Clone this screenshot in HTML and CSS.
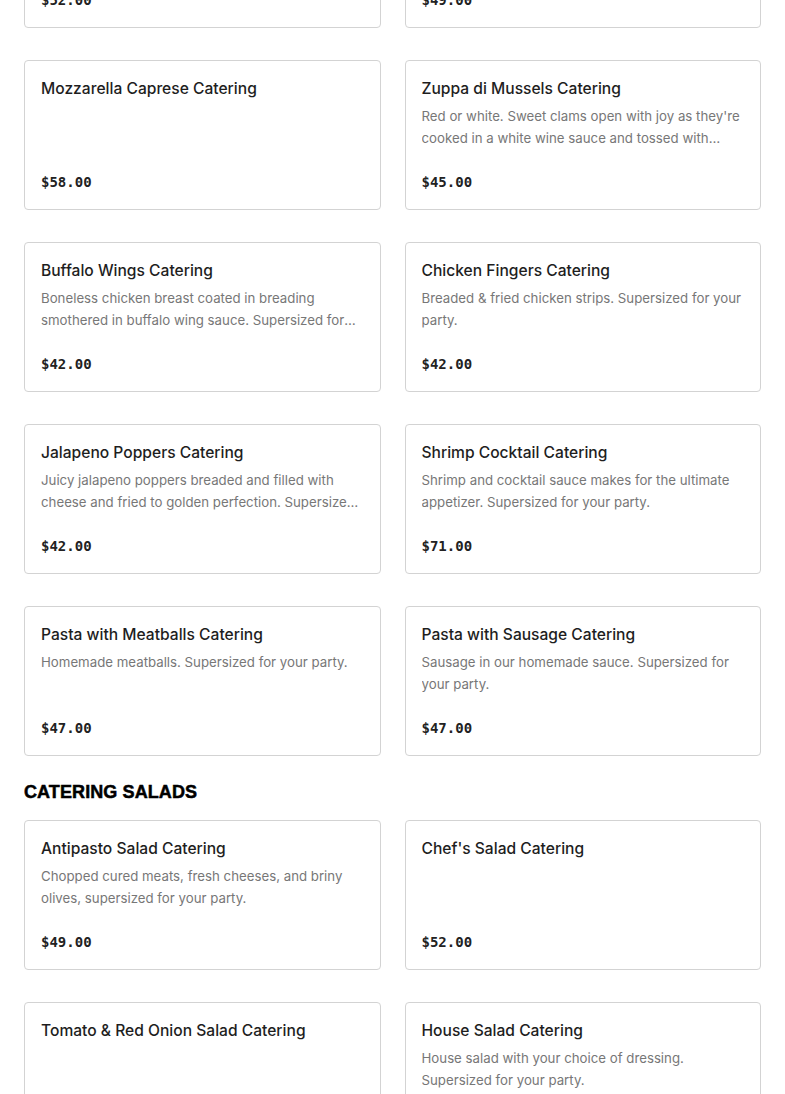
FILE: index.html
```html
<!DOCTYPE html>
<html lang="en">
<head>
    <meta charset="UTF-8">
    <meta name="viewport" content="width=device-width, initial-scale=1.0">
    <title>Catering Menu</title>
    <link rel="stylesheet" href="styles.css">
</head>
<body>
    <div class="menu">
        <section class="menu-section">
            <div class="item-grid">
                <div class="item-card">
                    <h3 class="item-name">Fried Calamari Catering</h3>
                    <p class="item-desc">Lightly breaded and fried calamari. Supersized for your party.</p>
                    <div class="item-price">$52.00</div>
                </div>
                <div class="item-card">
                    <h3 class="item-name">Baked Clams Catering</h3>
                    <p class="item-desc">Baked clams with seasoned breadcrumbs. Supersized for your party.</p>
                    <div class="item-price">$49.00</div>
                </div>

                <div class="item-card">
                    <h3 class="item-name">Mozzarella Caprese Catering</h3>
                    <p class="item-desc"></p>
                    <div class="item-price">$58.00</div>
                </div>
                <div class="item-card">
                    <h3 class="item-name">Zuppa di Mussels Catering</h3>
                    <p class="item-desc">Red or white. Sweet clams open with joy as they're cooked in a white wine sauce and tossed with garlic and herbs. Supersized for your party.</p>
                    <div class="item-price">$45.00</div>
                </div>

                <div class="item-card">
                    <h3 class="item-name">Buffalo Wings Catering</h3>
                    <p class="item-desc">Boneless chicken breast coated in breading smothered in buffalo wing sauce. Supersized for your party.</p>
                    <div class="item-price">$42.00</div>
                </div>
                <div class="item-card">
                    <h3 class="item-name">Chicken Fingers Catering</h3>
                    <p class="item-desc">Breaded &amp; fried chicken strips. Supersized for your party.</p>
                    <div class="item-price">$42.00</div>
                </div>

                <div class="item-card">
                    <h3 class="item-name">Jalapeno Poppers Catering</h3>
                    <p class="item-desc">Juicy jalapeno poppers breaded and filled with cheese and fried to golden perfection. Supersized for your party.</p>
                    <div class="item-price">$42.00</div>
                </div>
                <div class="item-card">
                    <h3 class="item-name">Shrimp Cocktail Catering</h3>
                    <p class="item-desc">Shrimp and cocktail sauce makes for the ultimate appetizer. Supersized for your party.</p>
                    <div class="item-price">$71.00</div>
                </div>

                <div class="item-card">
                    <h3 class="item-name">Pasta with Meatballs Catering</h3>
                    <p class="item-desc">Homemade meatballs. Supersized for your party.</p>
                    <div class="item-price">$47.00</div>
                </div>
                <div class="item-card">
                    <h3 class="item-name">Pasta with Sausage Catering</h3>
                    <p class="item-desc">Sausage in our homemade sauce. Supersized for your party.</p>
                    <div class="item-price">$47.00</div>
                </div>
            </div>
        </section>

        <section class="menu-section">
            <h2 class="section-title">CATERING SALADS</h2>
            <div class="item-grid">
                <div class="item-card">
                    <h3 class="item-name">Antipasto Salad Catering</h3>
                    <p class="item-desc">Chopped cured meats, fresh cheeses, and briny olives, supersized for your party.</p>
                    <div class="item-price">$49.00</div>
                </div>
                <div class="item-card">
                    <h3 class="item-name">Chef's Salad Catering</h3>
                    <p class="item-desc"></p>
                    <div class="item-price">$52.00</div>
                </div>

                <div class="item-card">
                    <h3 class="item-name">Tomato &amp; Red Onion Salad Catering</h3>
                    <p class="item-desc"></p>
                    <div class="item-price">$42.00</div>
                </div>
                <div class="item-card">
                    <h3 class="item-name">House Salad Catering</h3>
                    <p class="item-desc">House salad with your choice of dressing. Supersized for your party.</p>
                    <div class="item-price">$42.00</div>
                </div>
            </div>
        </section>
    </div>
</body>
</html>
```

FILE: styles.css
```css
body {
    margin: 0;
    padding: 0 24px;
    background-color: #fff;
    font-family: Inter, "Liberation Sans", sans-serif;
    color: #222;
}
.menu {
    margin-top: -122px;
}
.section-title {
    margin: 24px 0 16px;
    font-family: "Liberation Sans", Arial, sans-serif;
    font-size: 18px;
    font-weight: 900;
    line-height: 24px;
    letter-spacing: 0.1px;
    color: #000;
    -webkit-text-stroke: 0.5px #000;
}
.item-grid {
    display: grid;
    grid-template-columns: 1fr 1fr;
    column-gap: 24px;
    row-gap: 32px;
}
.item-card {
    display: flex;
    flex-direction: column;
    height: 150px;
    box-sizing: border-box;
    padding: 16px;
    border: 1px solid #d3d3d3;
    border-radius: 4px;
}
.item-name {
    margin: 0;
    font-size: 15.6px;
    font-weight: 500;
    line-height: 24px;
    color: #1e1e1e;
}
.item-desc {
    margin: 4px 0 0;
    font-size: 13.25px;
    line-height: 22px;
    color: #777;
    display: -webkit-box;
    -webkit-line-clamp: 2;
    -webkit-box-orient: vertical;
    overflow: hidden;
}
.item-price {
    margin-top: auto;
    font-family: "DejaVu Sans Mono", "Liberation Mono", monospace;
    font-size: 14px;
    font-weight: bold;
    line-height: 22px;
    color: #222;
}
```
